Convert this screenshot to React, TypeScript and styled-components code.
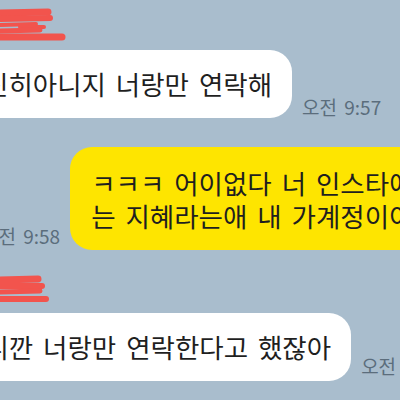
import styled, { createGlobalStyle } from "styled-components";

const Global = createGlobalStyle`
  html, body {
    margin: 0;
    padding: 0;
    background: #a9bdcd;
  }
`;

const Screen = styled.div`
  width: 400px;
  height: 400px;
  overflow: hidden;
  background: #a9bdcd;
  font-family: "Noto Sans CJK KR", "Noto Sans", sans-serif;
  display: flex;
  flex-direction: column;
`;

const Scribble = styled.svg<{ $top: number }>`
  display: block;
  margin-top: ${(p) => p.$top}px;
  flex-shrink: 0;
`;

const Row = styled.div<{ $top: number; $shift: number }>`
  display: flex;
  align-items: flex-end;
  gap: 10px;
  margin-top: ${(p) => p.$top}px;
  margin-left: ${(p) => p.$shift}px;
  flex-shrink: 0;
`;

const Bubble = styled.div<{ $mine?: boolean }>`
  flex-shrink: 0;
  white-space: nowrap;
  font-size: 26.5px;
  word-spacing: 4px;
  line-height: 33px;
  color: #1f1f1f;
  background: ${(p) => (p.$mine ? "#fee500" : "#ffffff")};
  border-radius: 22px;
  padding: ${(p) => (p.$mine ? "19px 20px 18px 21px" : "17px 20px 18px 16px")};
`;

const Time = styled.span<{ $drop: number }>`
  flex-shrink: 0;
  white-space: nowrap;
  font-size: 19px;
  line-height: 22px;
  word-spacing: 3px;
  color: #5b6d7c;
  margin-bottom: ${(p) => p.$drop}px;
`;

function App() {
  return (
    <Screen>
      <Global />
      <Scribble $top={8} width="70" height="36" viewBox="0 0 70 36">
        <g stroke="#f2544d" strokeLinecap="round" fill="none">
          <path d="M-4 5 L48 4" strokeWidth="7" />
          <path d="M-4 11 L50 10" strokeWidth="6" />
          <path d="M-4 17 L36 16 M20 19 L44 19" strokeWidth="4" />
          <path d="M-4 23 L40 22" strokeWidth="5" />
          <path d="M-4 29 L62 29" strokeWidth="7" />
        </g>
      </Scribble>
      <Row $top={6} $shift={-32}>
        <Bubble>진히아니지 너랑만 연락해</Bubble>
        <Time $drop={0}>오전 9:57</Time>
      </Row>
      <Row $top={29} $shift={-19}>
        <Time $drop={3}>오전 9:58</Time>
        <Bubble $mine>
          ㅋㅋㅋ 어이없다 너 인스타에
          <br />는 지혜라는애 내 가계정이야
        </Bubble>
      </Row>
      <Scribble $top={25} width="56" height="30" viewBox="0 0 56 30">
        <g stroke="#f2544d" strokeLinecap="round" fill="none">
          <path d="M-4 5 L38 4" strokeWidth="7" />
          <path d="M-4 11 L42 11" strokeWidth="6" />
          <path d="M-4 17 L40 16" strokeWidth="5" />
          <path d="M-4 24 L46 24" strokeWidth="6" />
        </g>
      </Scribble>
      <Row $top={8} $shift={-56}>
        <Bubble>그니깐 너랑만 연락한다고 했잖아</Bubble>
        <Time $drop={4}>오전 9:59</Time>
      </Row>
    </Screen>
  );
}

export default App;
